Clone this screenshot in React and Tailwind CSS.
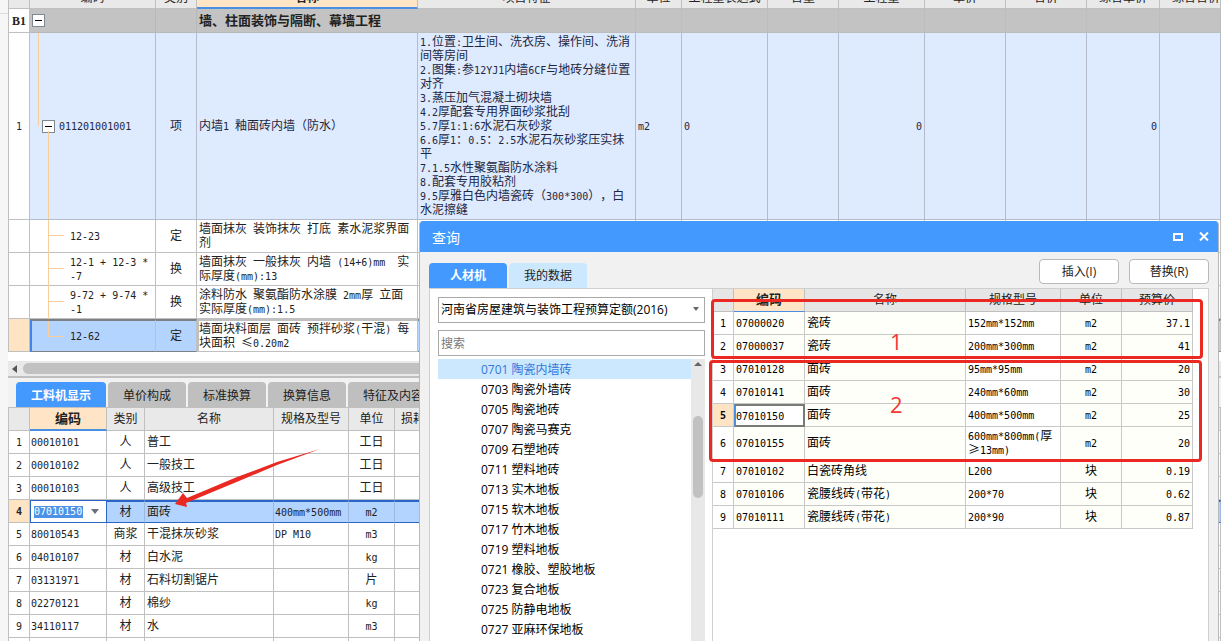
import { useState } from "react";

const billColumns = [
  { label: "编码", col: "w-[126px]" },
  { label: "类别", col: "w-[41px]" },
  { label: "名称", col: "w-[221px]", active: true },
  { label: "项目特征", col: "w-[218px]" },
  { label: "单位", col: "w-[46px]" },
  { label: "工程量表达式", col: "w-[86px]" },
  { label: "含量", col: "w-[71px]" },
  { label: "工程量", col: "w-[86px]" },
  { label: "单价", col: "w-[81px]" },
  { label: "合价", col: "w-[81px]" },
  { label: "综合单价", col: "w-[73px]" },
  { label: "综合合价", col: "" },
];

const features = [
  "1.位置:卫生间、洗衣房、操作间、洗消",
  "间等房间",
  "2.图集:参12YJ1内墙6CF与地砖分缝位置",
  "对齐",
  "3.蒸压加气混凝土砌块墙",
  "4.2厚配套专用界面砂浆批刮",
  "5.7厚1:1:6水泥石灰砂浆",
  "6.6厚1：0.5：2.5水泥石灰砂浆压实抹",
  "平",
  "7.1.5水性聚氨酯防水涂料",
  "8.配套专用胶粘剂",
  "9.5厚雅白色内墙瓷砖（300*300），白",
  "水泥擦缝",
].join("\n");

const quotas = [
  { code: "12-23", type: "定", name: "墙面抹灰 装饰抹灰 打底 素水泥浆界面\n剂" },
  { code: "12-1 + 12-3 *\n-7", type: "换", name: "墙面抹灰 一般抹灰 内墙 (14+6)mm  实\n际厚度(mm):13" },
  { code: "9-72 + 9-74 *\n-1", type: "换", name: "涂料防水 聚氨酯防水涂膜 2mm厚 立面\n实际厚度(mm):1.5" },
  { code: "12-62", type: "定", name: "墙面块料面层 面砖 预拌砂浆(干混) 每\n块面积 ≤0.20m2", selected: true },
];

const detailTabs = ["工料机显示", "单价构成", "标准换算", "换算信息", "特征及内容"];

const resources = [
  { code: "00010101", type: "人", name: "普工", spec: "", unit: "工日" },
  { code: "00010102", type: "人", name: "一般技工", spec: "", unit: "工日" },
  { code: "00010103", type: "人", name: "高级技工", spec: "", unit: "工日" },
  { code: "07010150", type: "材", name: "面砖", spec: "400mm*500mm", unit: "m2", selected: true },
  { code: "80010543", type: "商浆", name: "干混抹灰砂浆", spec: "DP M10", unit: "m3" },
  { code: "04010107", type: "材", name: "白水泥", spec: "", unit: "kg" },
  { code: "03131971", type: "材", name: "石料切割锯片", spec: "", unit: "片" },
  { code: "02270121", type: "材", name: "棉纱", spec: "", unit: "kg" },
  { code: "34110117", type: "材", name: "水", spec: "", unit: "m3" },
];

const categories = [
  "0701 陶瓷内墙砖",
  "0703 陶瓷外墙砖",
  "0705 陶瓷地砖",
  "0707 陶瓷马赛克",
  "0709 石塑地砖",
  "0711 塑料地砖",
  "0713 实木地板",
  "0715 软木地板",
  "0717 竹木地板",
  "0719 塑料地板",
  "0721 橡胶、塑胶地板",
  "0723 复合地板",
  "0725 防静电地板",
  "0727 亚麻环保地板",
];

const materials = [
  { code: "07000020", name: "瓷砖", spec: "152mm*152mm", unit: "m2", price: "37.1" },
  { code: "07000037", name: "瓷砖", spec: "200mm*300mm", unit: "m2", price: "41" },
  { code: "07010128", name: "面砖", spec: "95mm*95mm", unit: "m2", price: "20" },
  { code: "07010141", name: "面砖", spec: "240mm*60mm", unit: "m2", price: "30" },
  { code: "07010150", name: "面砖", spec: "400mm*500mm", unit: "m2", price: "25", current: true },
  { code: "07010155", name: "面砖", spec: "600mm*800mm(厚\n≥13mm)", unit: "m2", price: "20", tall: true },
  { code: "07010102", name: "白瓷砖角线", spec: "L200", unit: "块", price: "0.19" },
  { code: "07010106", name: "瓷腰线砖(带花)", spec: "200*70", unit: "块", price: "0.62" },
  { code: "07010111", name: "瓷腰线砖(带花)", spec: "200*90", unit: "块", price: "0.87" },
];

const runFonts = (part) => {
  if (/^[\x20-\x7e]/.test(part)) return "font-['DejaVu_Sans_Mono',monospace] text-[10px] leading-[10px]";
  if (/^[≤≥]/.test(part)) return "font-['Noto_Sans_CJK_SC',sans-serif] leading-[12px]";
  return "";
};

// Latin runs take half the width of a Chinese character, as in a terminal grid
const GridText = ({ children }) =>
  children.split("\n").map((line, n) => (
    <span key={n} className="block whitespace-pre [text-spacing-trim:space-all]">
      {line
        .split(/([\x20-\x7e]+|[≤≥])/)
        .filter(Boolean)
        .map((part, i) => (
          <span key={i} className={runFonts(part)}>
            {part}
          </span>
        ))}
    </span>
  ));

const Toggle = ({ label }) => (
  <button
    type="button"
    aria-label={label}
    className="flex h-[13px] w-[13px] shrink-0 items-center justify-center border border-[#7f8790] bg-white"
  >
    <span className="h-px w-[7px] bg-black" />
  </button>
);

const BillTable = () => {
  const cell = "border-r border-b border-[#b4bccb] p-0 ";
  const plain = "border-r border-b border-[#c0c0c0] p-0 ";
  return (
    <table className="-mt-[14px] w-full table-fixed border-separate border-spacing-0 font-['Liberation_Sans','Noto_Sans_CJK_SC',sans-serif] leading-[14px]">
      <colgroup>
        <col className="w-[22px]" />
        {billColumns.map((c) => (
          <col key={c.label} className={c.col} />
        ))}
      </colgroup>
      <thead>
        <tr className="h-[23px] bg-[#e9e9e9]">
          <th className="border-x border-b border-[#c0c0c0] p-0" />
          {billColumns.map((c, i) => (
            <th
              key={c.label}
              className={`overflow-hidden border-r p-0 pt-0.5 whitespace-nowrap ${
                c.active
                  ? "border-b-2 border-r-[#c0c0c0] border-b-[#4a90e2] bg-[#ffe5c5] font-bold"
                  : "border-b border-[#c0c0c0] font-normal"
              } ${i === billColumns.length - 1 ? "pl-3 text-left" : ""}`}
            >
              {c.label}
            </th>
          ))}
        </tr>
      </thead>
      <tbody>
        <tr className="h-[24px] bg-[#c3c3c3] font-bold">
          <td className="border-x border-b border-[#c0c0c0] bg-white p-0 text-center font-['Liberation_Serif',serif]">
            B1
          </td>
          <td className="border-r border-b border-[#b8b8b8] p-0 pl-0.5">
            <Toggle label="收起分部" />
          </td>
          <td className="border-r border-b border-[#b8b8b8]" />
          <td className="border-b border-[#b8b8b8] p-0 pl-0.5 text-[13px]">墙、柱面装饰与隔断、幕墙工程</td>
          {billColumns.slice(3).map((c) => (
            <td key={c.label} className="border-r border-b border-[#bdbdbd]" />
          ))}
        </tr>
        <tr className="h-[187px] bg-[#deeafe] text-[#1d2742]">
          <td className="border-x border-b border-[#c0c0c0] bg-white p-0 text-center">
            <GridText>1</GridText>
          </td>
          <td className={cell + "relative"}>
            <span className="absolute top-0 left-2 h-[93px] w-px bg-[#f8cf9b]" />
            <span className="absolute bottom-0 left-[18px] h-[88px] w-px bg-[#f8cf9b]" />
            <div className="flex items-center gap-1 pl-3">
              <Toggle label="收起清单" />
              <GridText>011201001001</GridText>
            </div>
          </td>
          <td className={cell + "text-center"}>项</td>
          <td className={cell + "pl-0.5"}>
            <GridText>内墙1 釉面砖内墙（防水）</GridText>
          </td>
          <td className={cell + "pl-0.5"}>
            <GridText>{features}</GridText>
          </td>
          <td className={cell + "pl-0.5"}>
            <GridText>m2</GridText>
          </td>
          <td className={cell + "pl-0.5"}>
            <GridText>0</GridText>
          </td>
          <td className={cell} />
          <td className={cell + "pr-0.5 text-right"}>
            <GridText>0</GridText>
          </td>
          <td className={cell} />
          <td className={cell} />
          <td className={cell + "pr-0.5 text-right"}>
            <GridText>0</GridText>
          </td>
          <td className={cell} />
        </tr>
        {quotas.map((q) => {
          const sel = q.selected ? "border-y-2 border-y-[#7d7f84] bg-[#b3d4ff] " : "";
          return (
            <tr key={q.code} className="h-[33px] bg-white">
              <td className={`border-x border-b border-[#c0c0c0] ${q.selected ? "bg-[#ffe4c4]" : ""}`} />
              <td className={plain + sel + "relative " + (q.selected ? "border-l-2 border-l-[#3f86e6]" : "")}>
                <span
                  className={`absolute top-0 w-px bg-[#f8cf9b] ${q.selected ? "left-4 h-[15px]" : "left-[18px] h-[33px]"}`}
                />
                <span
                  className={`absolute top-[15px] h-px w-4 bg-[#f8cf9b] ${q.selected ? "left-4" : "left-[18px]"}`}
                />
                <div className={q.selected ? "pl-[38px]" : "pl-10"}>
                  <GridText>{q.code}</GridText>
                </div>
              </td>
              <td className={plain + sel + "text-center"}>{q.type}</td>
              <td
                className={
                  plain +
                  (q.selected
                    ? "border-2 border-[#7d7f84] bg-white"
                    : "pl-0.5")
                }
              >
                <GridText>{q.name}</GridText>
              </td>
              {billColumns.slice(3).map((c) => (
                <td key={c.label} className={plain + sel} />
              ))}
            </tr>
          );
        })}
      </tbody>
    </table>
  );
};

const ResourceTable = () => {
  const cell = "border-r border-b border-[#c0c0c0] p-0 ";
  const head = "border-t border-r border-b border-[#c0c0c0] p-0 font-normal ";
  return (
    <table className="w-full table-fixed border-separate border-spacing-0 bg-white font-['Liberation_Sans','Noto_Sans_CJK_SC',sans-serif] leading-[14px]">
      <colgroup>
        <col className="w-[22px]" />
        <col className="w-[77px]" />
        <col className="w-[38px]" />
        <col className="w-[129px]" />
        <col className="w-[75px]" />
        <col className="w-[46px]" />
        <col />
      </colgroup>
      <thead>
        <tr className="h-[24px] bg-[#e9e9e9]">
          <th className={head + "border-l"} />
          <th className="border-t border-r border-b-2 border-[#c0c0c0] border-b-[#4a90e2] bg-[#ffe5c5] p-0 text-[13px] font-bold">
            编码
          </th>
          <th className={head}>类别</th>
          <th className={head}>名称</th>
          <th className={head}>规格及型号</th>
          <th className={head}>单位</th>
          <th className={head + "pl-1.5 text-left"}>损耗率</th>
        </tr>
      </thead>
      <tbody>
        {resources.map((r, i) => {
          const sel = r.selected ? "border-y-2 border-y-[#2a66c8] border-r-[#9db8dc] bg-[#b3d4ff] " : "";
          return (
            <tr key={r.code} className="h-[23px]">
              <td
                className={cell + "border-l text-center " + (r.selected ? "bg-[#ffe4c4] font-bold" : "")}
              >
                <GridText>{String(i + 1)}</GridText>
              </td>
              {r.selected ? (
                <td className="border border-[#2a66c8] bg-white p-0">
                  <div className="flex items-center">
                    <input
                      aria-label="编码"
                      defaultValue={r.code}
                      className="ml-[3px] h-3 w-[49px] bg-[#4d92e6] font-['DejaVu_Sans_Mono',monospace] text-[10px] text-white outline-none"
                    />
                    <button type="button" aria-label="选择编码" className="flex h-4 w-6 items-center justify-center">
                      <svg width="8" height="5" viewBox="0 0 8 5">
                        <path d="M0 0h8L4 5z" fill="#68707e" />
                      </svg>
                    </button>
                  </div>
                </td>
              ) : (
                <td className={cell + "pl-px"}>
                  <GridText>{r.code}</GridText>
                </td>
              )}
              <td className={cell + sel + "text-center"}>{r.type}</td>
              <td className={cell + sel + "pl-0.5"}>{r.name}</td>
              <td className={cell + sel + "pl-px"}>
                <GridText>{r.spec}</GridText>
              </td>
              <td className={cell + sel + "text-center"}>
                <GridText>{r.unit}</GridText>
              </td>
              <td className={cell + sel} />
            </tr>
          );
        })}
        <tr className="h-[23px]">
          {Array.from({ length: 7 }, (_, i) => (
            <td key={i} className={cell + (i === 0 ? "border-l" : "")} />
          ))}
        </tr>
      </tbody>
    </table>
  );
};

const MaterialTable = () => {
  const cell = "border-r border-b border-[#c8c8c8] p-0 ";
  const head = "border-r border-b border-[#c0c0c0] p-0 font-normal ";
  return (
    <table className="w-[480px] table-fixed border-separate border-spacing-0 font-['Liberation_Sans','Noto_Sans_CJK_SC',sans-serif] leading-[14px] text-black">
      <colgroup>
        <col className="w-[21px]" />
        <col className="w-[71px]" />
        <col className="w-[161px]" />
        <col className="w-[95px]" />
        <col className="w-[61px]" />
        <col />
      </colgroup>
      <thead>
        <tr className="h-[23px] bg-[#e6e6e6] text-[#222]">
          <th className={head} />
          <th className="border-r border-b border-[#c0c0c0] border-b-[#4a90e2] bg-[#ffe5c5] p-0 text-[13px] font-bold">
            编码
          </th>
          <th className={head}>名称</th>
          <th className={head}>规格型号</th>
          <th className={head}>单位</th>
          <th className={head}>预算价</th>
        </tr>
      </thead>
      <tbody>
        {materials.map((m, i) => (
          <tr key={m.code} className={`bg-[#fffffa] ${m.tall ? "h-[33px]" : "h-[23px]"}`}>
            <td className={cell + "text-center " + (m.current ? "bg-[#ffe4c4] font-bold" : "bg-white")}>
              <GridText>{String(i + 1)}</GridText>
            </td>
            <td
              className={
                m.current
                  ? "border-2 border-[#777b75] border-l-[#4a90e2] bg-white p-0"
                  : cell + "pl-0.5"
              }
            >
              <GridText>{m.code}</GridText>
            </td>
            <td className={cell + "pl-0.5"}>
              <GridText>{m.name}</GridText>
            </td>
            <td className={cell + "bg-white pl-0.5"}>
              <GridText>{m.spec}</GridText>
            </td>
            <td className={cell + "text-center"}>
              <GridText>{m.unit}</GridText>
            </td>
            <td className={cell + "pr-0.5 text-right"}>
              <GridText>{m.price}</GridText>
            </td>
          </tr>
        ))}
      </tbody>
    </table>
  );
};

const QueryDialog = () => {
  const [category, setCategory] = useState(categories[0]);

  return (
    <section
      role="dialog"
      aria-label="查询"
      className="absolute top-[221px] right-[2px] bottom-0 left-[419px] flex flex-col overflow-hidden rounded-t border-x border-[#b5b8bd] bg-[#f1f1f1] font-['Open_Sans','Noto_Sans_CJK_SC',sans-serif]"
    >
      <header className="flex h-[31px] shrink-0 items-center bg-[#4499ff] pr-[9px] pl-3 text-white">
        <h2 className="pt-0.5 text-sm">查询</h2>
        <div className="ml-auto flex items-center gap-4">
          <button type="button" aria-label="最大化">
            <svg width="10" height="8" viewBox="0 0 10 8" fill="none" stroke="#fff" strokeWidth="2">
              <path d="M1 1h8v6H1z" />
            </svg>
          </button>
          <button type="button" aria-label="关闭">
            <svg width="10" height="9" viewBox="0 0 10 9" stroke="#fff" strokeWidth="2">
              <path d="M1 0.5l8 8M9 0.5l-8 8" />
            </svg>
          </button>
        </div>
      </header>

      <div className="flex shrink-0 items-end gap-[2px] px-[9px] pt-[7px]">
        <button type="button" className="h-[25px] w-[78px] rounded-t-sm bg-[#4499ff] font-bold text-white">
          人材机
        </button>
        <button type="button" className="h-[25px] w-[78px] rounded-t-sm bg-[#cce8ff] text-[#222]">
          我的数据
        </button>
        <div className="mb-1 ml-auto flex gap-[10px]">
          <button type="button" className="h-[25px] w-[80px] rounded-sm border border-[#b9b9b9] bg-white">
            插入(I)
          </button>
          <button type="button" className="h-[25px] w-[80px] rounded-sm border border-[#b9b9b9] bg-white">
            替换(R)
          </button>
        </div>
      </div>

      <div className="mx-[9px] flex min-h-0 flex-1 border border-b-0 border-[#cfcfcf] bg-white">
        <div className="flex w-[282px] shrink-0 flex-col pt-2 pr-[7px] pl-2">
          <div className="relative">
            <select
              aria-label="定额库"
              className="h-[26px] w-full appearance-none border border-[#a9a9a9] bg-white px-0.5 text-black"
            >
              <option>河南省房屋建筑与装饰工程预算定额(2016)</option>
            </select>
            <svg className="pointer-events-none absolute top-[10px] right-1.5" width="6" height="4" viewBox="0 0 6 4">
              <path d="M0 0h6L3 4z" fill="#666" />
            </svg>
          </div>
          <input
            aria-label="搜索"
            placeholder="搜索"
            className="mt-[7px] h-[26px] w-full shrink-0 border border-[#a9a9a9] px-0.5 placeholder:text-[#777]"
          />
          <div className="mt-[3px] flex min-h-0 flex-1">
            <ul className="flex-1 overflow-hidden text-black">
              {categories.map((c) => (
                <li key={c}>
                  <button
                    type="button"
                    onClick={() => setCategory(c)}
                    className={`block h-5 w-full pt-0.5 pl-[43px] text-left ${
                      c === category ? "bg-[#cce8ff] text-[#3477d8]" : ""
                    }`}
                  >
                    {c}
                  </button>
                </li>
              ))}
            </ul>
            <div className="flex w-[14px] flex-col items-center bg-[#e8e8e8] pt-[3px]">
              <svg width="8" height="4" viewBox="0 0 8 4">
                <path d="M4 0l4 4H0z" fill="#666" />
              </svg>
              <div className="mt-[50px] h-[82px] w-[10px] rounded-full bg-[#c1c1c1]" />
            </div>
          </div>
        </div>
        <div className="min-w-0 flex-1 border-l border-[#cfcfcf]">
          <MaterialTable />
        </div>
      </div>
    </section>
  );
};

// Red marker drawings laid over the windows
const Annotations = () => (
  <div className="pointer-events-none absolute inset-0 font-['Open_Sans',sans-serif] text-[22px] leading-6 text-[#f03a37]">
    <div className="absolute top-[299px] left-[711px] h-[60px] w-[492px] rounded-sm border-3 border-[#ea2a22]" />
    <div className="absolute top-[360px] left-[709px] h-[102px] w-[493px] rounded-sm border-3 border-[#ea2a22]" />
    <span className="absolute top-[329px] left-[890px]">1</span>
    <span className="absolute top-[392px] left-[890px]">2</span>
    <svg className="absolute top-[448px] left-[173px]" width="148" height="60" viewBox="0 0 148 60">
      <path d="M147 1L104 14L64 29L14 50L10 45L2 56L14 59L13 55L66 33L104 17z" fill="#ea2a22" />
    </svg>
  </div>
);

export default function App() {
  return (
    <div className="relative flex h-screen overflow-hidden bg-[#f2f2f2] font-['Noto_Sans_CJK_SC',sans-serif] text-xs text-[#222]">
      <aside className="w-2 shrink-0 bg-[#f6f6f6]">
        <div className="h-[14px] border-b border-[#dcdcdc]" />
      </aside>
      <main className="min-w-0 flex-1">
        <div className="overflow-hidden bg-white pb-[9px]">
          <BillTable />
        </div>
        <div className="flex h-[15px] items-center gap-[6px] bg-[#e9e9e9] px-1">
          <svg width="5" height="8" viewBox="0 0 5 8">
            <path d="M5 0v8L0 4z" fill="#555" />
          </svg>
          <div className="h-[11px] flex-1 rounded-full bg-[#c1c1c1]" />
        </div>
        <div className="h-[2px] bg-[#bfbfbf]" />
        <nav className="flex gap-[2px] pt-1 pl-2">
          {detailTabs.map((tab, i) => (
            <button
              key={tab}
              type="button"
              className={`h-[25px] rounded-t-sm ${
                i === 0
                  ? "w-[90px] bg-[#4499ff] font-bold text-white"
                  : i === 4
                    ? "w-[90px] bg-[#bfbfbf]"
                    : "w-[78px] bg-[#bfbfbf]"
              }`}
            >
              {tab}
            </button>
          ))}
        </nav>
        <ResourceTable />
      </main>
      <QueryDialog />
      <Annotations />
    </div>
  );
}
